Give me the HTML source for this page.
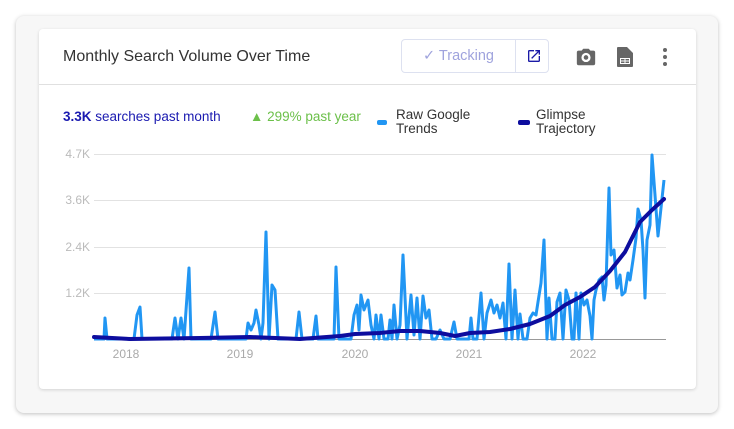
<!DOCTYPE html>
<html><head><meta charset="utf-8"><style>
body{margin:0;width:734px;height:429px;background:#fff;font-family:"Liberation Sans",sans-serif;position:relative;overflow:hidden}
.outer{position:absolute;left:16px;top:16px;width:702px;height:397px;background:#f7f7f7;border-radius:8px;box-shadow:0 1px 4px rgba(0,0,0,.25)}
.card{position:absolute;left:39px;top:29px;width:657px;height:360px;background:#fff;border-radius:4px;box-shadow:0 1px 3px rgba(0,0,0,.15)}
.hdr{position:absolute;left:0;top:0;width:657px;height:55px;border-bottom:1px solid #e0e0e0}
.title{position:absolute;left:24px;top:19px;font-size:16px;color:#333}
.btn{position:absolute;left:362px;top:10px;width:148px;height:34px;border:1px solid #dde1f0;border-radius:4px;box-sizing:border-box}
.btn .t{position:absolute;left:0;top:0;width:113px;height:32px;line-height:32px;text-align:center;color:#9fa3dd;font-size:14.5px;font-weight:500;border-right:1px solid #dde1f0}
.s{position:absolute;font-size:13.5px;top:80px}
</style></head><body>
<div class="outer"></div>
<div class="card">
<div class="hdr">
<div class="title">Monthly Search Volume Over Time</div>
<div class="btn"><div class="t">✓ Tracking</div>
<svg style="position:absolute;left:124px;top:8px" width="16" height="16" viewBox="0 0 24 24"><path d="M19 19H5V5h7V3H5a2 2 0 0 0-2 2v14a2 2 0 0 0 2 2h14c1.1 0 2-.9 2-2v-7h-2v7zM14 3v2h3.59l-9.83 9.83 1.41 1.41L19 6.41V10h2V3h-7z" fill="#1a1aa6"/></svg></div>
<svg style="position:absolute;left:536px;top:17px" width="22" height="22" viewBox="0 0 24 24"><path d="M9 3L7.2 5H4a2 2 0 0 0-2 2v12a2 2 0 0 0 2 2h16a2 2 0 0 0 2-2V7a2 2 0 0 0-2-2h-3.2L15 3H9zm3 4.5a5 5 0 1 1 0 10 5 5 0 0 1 0-10zm0 2.5a2.5 2.5 0 1 0 0 5 2.5 2.5 0 0 0 0-5z" fill="#666"/></svg>
<svg style="position:absolute;left:576px;top:17px" width="20" height="22" viewBox="0 0 20 22"><path d="M3 1h9l6 6v13a1 1 0 0 1-1 1H3a1 1 0 0 1-1-1V2a1 1 0 0 1 1-1zM5 12v6h10v-6zM6 13h3.5v1.5H6zM10.5 13H14v1.5h-3.5zM6 15.5h3.5V17H6zM10.5 15.5H14V17h-3.5z" fill="#666" fill-rule="evenodd"/></svg>
<svg style="position:absolute;left:623px;top:18px" width="6" height="20"><circle cx="3" cy="3" r="2" fill="#666"/><circle cx="3" cy="10" r="2" fill="#666"/><circle cx="3" cy="17" r="2" fill="#666"/></svg>
</div>
<div class="s" style="left:24px;color:#1a1ab0"><b>3.3K</b> searches past month</div>
<div class="s" style="left:211px;color:#6cc04a">▲ 299% past year</div>
<div style="position:absolute;left:338px;top:91px;width:10px;height:5px;border-radius:2px;background:#2196f3"></div>
<div class="s" style="left:357px;top:79px;line-height:14px;color:#333">Raw Google<br>Trends</div>
<div style="position:absolute;left:479px;top:91px;width:12px;height:5px;border-radius:2px;background:#0d0d9e"></div>
<div class="s" style="left:497px;top:79px;line-height:14px;color:#333">Glimpse<br>Trajectory</div>
</div>
<svg style="position:absolute;left:0;top:0" width="734" height="429">
<g stroke="#e2e2e2" stroke-width="1"><line x1="94" y1="154.5" x2="666" y2="154.5"/><line x1="94" y1="200.5" x2="666" y2="200.5"/><line x1="94" y1="247.5" x2="666" y2="247.5"/><line x1="94" y1="293.5" x2="666" y2="293.5"/></g>
<line x1="94" y1="339.5" x2="666" y2="339.5" stroke="#999"/>
<g font-size="12" fill="#bbb" font-family="Liberation Sans,sans-serif" text-anchor="end"><text x="90" y="158">4.7K</text><text x="90" y="204">3.6K</text><text x="90" y="251">2.4K</text><text x="90" y="297">1.2K</text></g>
<g font-size="12" fill="#aaa" font-family="Liberation Sans,sans-serif" text-anchor="middle"><text x="126" y="358">2018</text><text x="240" y="358">2019</text><text x="355" y="358">2020</text><text x="469" y="358">2021</text><text x="583" y="358">2022</text></g>
<polyline fill="none" stroke="#2196f3" stroke-width="3" stroke-linejoin="round" points="94,339 104,339 105,318 107,339 134,339 137,315 140,307 142,339 172,339 175,318 178,339 181,318 184,339 189,268 191,339 211,339 215,312 218,339 246,339 248,323 251,330 254,323 256,310 259,325 261,339 263,323 266,232 269,339 272,285 275,290 278,339 296,339 299,312 302,339 313,339 316,316 318,339 334,339 336,267 339,339 351,339 354,315 357,305 359,330 361,295 364,310 368,300 371,325 374,339 376,315 379,339 381,315 384,339 388,339 390,320 392,339 394,305 397,339 400,325 403,255 407,339 411,295 414,335 417,298 420,339 423,296 426,318 429,310 432,339 436,339 440,330 444,339 450,339 454,322 457,339 463,339 469,339 471,318 473,339 477,339 481,293 484,339 487,313 491,300 494,313 497,305 500,318 503,303 506,339 509,264 512,339 515,290 518,339 520,314 523,339 527,339 530,318 533,313 536,315 538,302 541,283 544,240 547,339 549,298 552,339 555,339 557,302 560,293 563,339 566,290 569,300 572,339 574,339 576,293 579,339 581,293 584,305 587,300 590,316 592,339 594,300 596,290 599,280 602,277 604,300 606,285 609,188 611,255 614,250 617,288 620,275 622,295 625,292 628,273 630,280 633,260 636,238 638,209 641,220 643,250 645,298 647,240 650,225 652,155 655,195 658,236 661,208 664,180"/>
<polyline fill="none" stroke="#0d0d9e" stroke-width="4" stroke-linejoin="round" stroke-linecap="round" points="94,337 130,339 200,338 250,337 300,339 340,336 355,334 380,333 400,331 420,331 440,333 455,336 470,333 490,332 510,329 530,324 550,316 565,305 580,297 595,287 610,271 625,252 640,222 652,210 664,199"/>
</svg>
</body></html>
